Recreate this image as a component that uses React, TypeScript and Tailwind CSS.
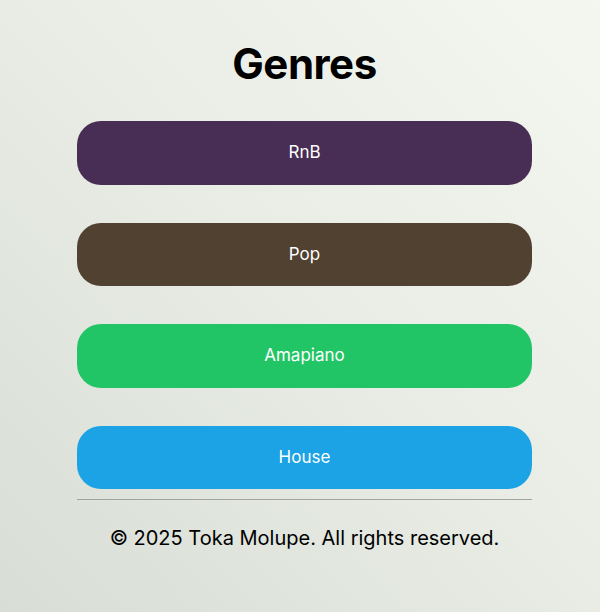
import React from 'react';

const genres = [
    { name: 'RnB', color: 'bg-[#482d55]' },
    { name: 'Pop', color: 'bg-[#504131]' },
    { name: 'Amapiano', color: 'bg-[#22c565]' },
    { name: 'House', color: 'bg-[#1ba3e5]' },
];

export default function App() {
    return (
        <div className="min-h-[612px] w-full bg-linear-to-tr from-[#d8ddd5] via-[#e8ece4] to-[#f4f7f0] font-['Inter',sans-serif] text-black">
            <div className="flex flex-col items-center pl-[9px] pt-[40px]">
                <h1 className="text-[42px] font-bold leading-[48px] tracking-[-0.5px]">Genres</h1>
                <div className="mt-[33px] flex w-[455px] flex-col gap-[38px]">
                    {genres.map((g) => (
                        <button
                            key={g.name}
                            className={`h-[63.5px] w-full rounded-[24px] text-[17px] text-white ${g.color}`}
                        >
                            {g.name}
                        </button>
                    ))}
                </div>
                <div className="mt-[10px] h-px w-[455px] bg-[#a3a3a3]" />
                <p className="mt-[24px] text-[20px] leading-[28px]">© 2025 Toka Molupe. All rights reserved.</p>
            </div>
        </div>
    );
}
